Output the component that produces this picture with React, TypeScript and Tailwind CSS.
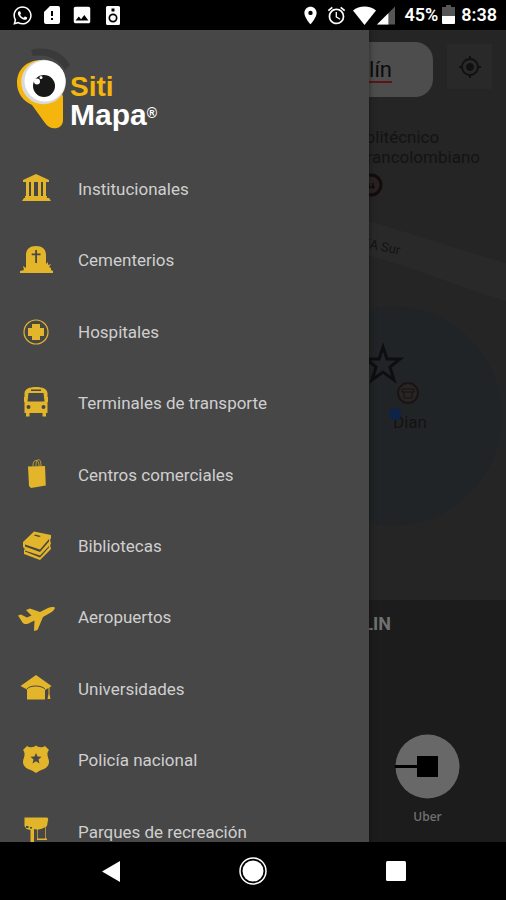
import React from 'react';
import { FaWhatsapp } from 'react-icons/fa';
import { MdAlarm, MdImage, MdMyLocation, MdPlace } from 'react-icons/md';

type MenuItem = {
  label: string;
  icon: React.ReactNode;
};

const items: MenuItem[] = [
  {
    label: 'Institucionales',
    icon: (
      <>
        <path d="M18 2 31 8v2H5V8z" />
        <path d="M8 10h3v14H8zM13 10h3v14h-3zM20 10h3v14h-3zM25 10h3v14h-3z" />
        <path d="M7 24h22v2h2l2 3H4l2-3h1z" />
      </>
    ),
  },
  {
    label: 'Cementerios',
    icon: (
      <>
        <path d="M8 27V12C8 6 12 3 18 3s10 3 10 9v9l2-2v3l3-1-2 3 2 1v2l2 1v2H2v-2l4-1-1-4 3 2z" />
        <path d="M17.2 7h1.8v3.5h3.500v1.800H19V20h-1.800v-7.700h-3.500v-1.800h3.500z" fill="#474747" />
      </>
    ),
  },
  {
    label: 'Hospitales',
    icon: (
      <>
        <circle cx="18" cy="17" r="12" fill="none" stroke="currentColor" strokeWidth="1.2" />
        <path d="M14 9h8v4h4v8h-4v4h-8v-4h-4v-8h4z" />
      </>
    ),
  },
  {
    label: 'Terminales de transporte',
    icon: (
      <path
        fillRule="evenodd"
        d="M18 1c-7 0-11 2-11.500 6v4H6v5h.5v11H8v3.500h3.500V27h13v3.500H28V27h1.500V16h.5v-5h-.5V7C29 3 25 1 18 1zm-5 2.500h10v1.500H13zM10.500 7h15l1 8.500h-17zM10.500 19a2 2 0 1 1 0 4 2 2 0 0 1 0-4zm15 0a2 2 0 1 1 0 4 2 2 0 0 1 0-4z"
      />
    ),
  },
  {
    label: 'Centros comerciales',
    icon: (
      <>
        <path d="M10 9.500 27 9l.8 19.500L13 31l-2-2z" />
        <path d="M15 9.500c0-4 1-6 3-6s3 2 3 6M18 9c0-4 1-6.500 2.500-6.500S23 5 23 9" fill="none" stroke="currentColor" strokeWidth=".8" />
      </>
    ),
  },
  {
    label: 'Bibliotecas',
    icon: (
      <>
        <path d="M16 2.500 33 6v3.500l-1 1 1 4.500-1 1 1 4-11 11L6 25v-4l1-1-2-2v-5z" />
        <path d="M7 15.500 22 20.500 31 10v2.500L22 23 7 17.500zM7 21.500 22 26.500l9-9.500v1.500l-9 10-15-6z" fill="#474747" />
        <path d="m17 5.500 6 1.500-2 1-5-1.500z" fill="#474747" />
      </>
    ),
  },
  {
    label: 'Aeropuertos',
    icon: (
      <path d="M0 15.500 3 14.500l6 3 4.500-2L8 10l4-1.500L22 12l8-4c3-1 6-1.500 7-.5 0 1.500-2 4-5 5.500l-7 4L19.500 30l-3.500 1 .5-10.500-6 3c-3 1-5 .5-6-1z" />
    ),
  },
  {
    label: 'Universidades',
    icon: (
      <>
        <path d="M18 3 33.500 14 31.500 15.500V22l1 5h-3l1-5v-6L27 18v9.500H9V17.500L2.500 14z" />
        <path d="M9 17c3-4 14-4 18 0" fill="none" stroke="#474747" strokeWidth="1" />
      </>
    ),
  },
  {
    label: 'Policía nacional',
    icon: (
      <path
        fillRule="evenodd"
        d="M9 3c2 1.500 5 1.500 7 .8L18 2.500l2 1.300c2 .7 5 .7 7-.8L31 7c-2.500 3-1.500 6-.5 9 1.500 5-.5 8-4.500 10-4 1.500-6 2.500-8 4-2-1.500-4-2.500-8-4-4-2-6-5-4.500-10 1-3 2-6-.5-9zm9 7-1.500 3.500-4 .3 3 2.700-1 4 3.500-2.200 3.500 2.200-1-4 3-2.700-4-.3z"
      />
    ),
  },
  {
    label: 'Parques de recreación',
    icon: (
      <>
        <path d="M8 3.500h20c2 0 2.500 1 2 2.500L29 12c-4 3-8 3.500-11 3.500l-2-.5v17h-3.500V16l-4-1-2-3V3.500z" />
        <path d="M19.500 14v11M27.500 12v13" stroke="currentColor" strokeWidth=".7" />
        <path d="M19 24.500h10V26H19z" />
        <path d="M8 12h2.500v2H8zM12 13h2v1.500h-2z" fill="#474747" />
      </>
    ),
  },
];

const StatusBar: React.FC = () => (
  <header className="flex h-[30px] shrink-0 items-center justify-between bg-black pl-3 pr-[9px] text-white">
    <div className="flex items-center gap-[9px]">
      <FaWhatsapp size={21} />
      <svg width="20" height="20" viewBox="0 0 20 20" fill="currentColor">
        <path fillRule="evenodd" d="M8 1h8a2 2 0 0 1 2 2v14a2 2 0 0 1-2 2H4a2 2 0 0 1-2-2V7zm1 5v5h2V6zm0 7v2h2v-2z" />
      </svg>
      <MdImage size={22} />
      <svg className="ml-1" width="14" height="19" viewBox="0 0 14 19" fill="currentColor">
        <path
          fillRule="evenodd"
          d="M1.500 0h11A1.500 1.500 0 0 1 14 1.500v16a1.500 1.500 0 0 1-1.500 1.500h-11A1.500 1.500 0 0 1 0 17.500v-16A1.500 1.500 0 0 1 1.500 0zM5.500 2.500v3h3v-3zM7 7.500a4.500 4.500 0 1 0 0 9 4.500 4.500 0 0 0 0-9z"
        />
        <circle cx="7" cy="12" r="2.800" />
      </svg>
    </div>
    <div className="flex items-center font-[Roboto,sans-serif] text-lg font-semibold">
      <MdPlace size={21} />
      <MdAlarm className="ml-[5px]" size={21} />
      <svg className="ml-[6px]" width="23" height="19" viewBox="0 0 23 19" fill="currentColor">
        <path d="M0 4.500C6-1 17-1 23 4.500L11.500 19z" />
      </svg>
      <svg className="ml-px" width="18" height="19" viewBox="0 0 19 19" fill="currentColor">
        <path d="M19 0v19H0z" fill="#555" />
        <path d="M12 7v12H0z" />
      </svg>
      <span className="ml-[9px]">45%</span>
      <svg className="ml-1" width="13" height="20" viewBox="0 0 13 20" fill="currentColor">
        <path d="M4 0h5v2h4v9H0V2h4z" fill="#555" />
        <path d="M0 11h13v7a1 1 0 0 1-1 1H1a1 1 0 0 1-1-1z" />
      </svg>
      <span className="ml-[6px]">8:38</span>
    </div>
  </header>
);

const MapView: React.FC = () => (
  <section className="relative flex-1 overflow-hidden bg-[#252525] text-[#131313]">
    <svg className="absolute left-0 top-0 h-[570px] w-[506px]" viewBox="0 0 506 570" aria-hidden="true">
      <path d="M300 175C370 188 420 208 506 233v38C440 252 390 224 300 212z" fill="#292929" />
      <circle cx="392" cy="386" r="110" fill="#212426" />
      <path d="m383 317 4 12h13l-10 8 4 13-11-8-11 8 4-13-10-8h13z" fill="none" stroke="#0d0e0f" strokeWidth="3" />
      <circle cx="408" cy="363" r="10" fill="#282524" stroke="#181514" strokeWidth="2" />
      <path d="M402 359h12M404 362v6h8v-6M402 359v3h12v-3" fill="none" stroke="#151311" />
      <circle cx="371" cy="155" r="10" fill="#282322" stroke="#120d0c" strokeWidth="3" />
      <path d="M367 157h8M369 153v6M373 153v6" stroke="#120d0c" strokeWidth="1.500" />
    </svg>

    <div className="relative flex items-start gap-[14px] pl-3 pr-[14px] pt-3">
      <div className="relative flex min-w-0 flex-1">
        <input
          aria-label="Buscar"
          defaultValue="Medellín"
          className="h-[55px] w-full rounded-[18px] bg-[#4d4d4d] pr-[41px] text-right font-[Roboto,sans-serif] text-[22px] text-[#0c0c0c] outline-none"
        />
        <span className="absolute bottom-[14px] right-[41px] h-[2px] w-[84px] bg-[#5a1515]" />
      </div>
      <button aria-label="Mi ubicación" className="mt-[2px] flex size-[45px] items-center justify-center bg-[#292929] text-[#111]">
        <MdMyLocation size={24} />
      </button>
    </div>

    <p className="absolute left-[355px] top-[97px] font-[Roboto,sans-serif] text-[17px] leading-5">
      Politécnico
      <br />
      Grancolombiano
    </p>
    <p className="absolute left-[355px] top-[206px] rotate-12 font-[Roboto,sans-serif] text-[13px]">55A Sur</p>
    <p className="absolute left-[393px] top-[382px] font-[Roboto,sans-serif] text-[17px] leading-5">Dian</p>
    <span className="absolute left-[389px] top-[378px] size-3 rounded-full bg-[#0d2348]" />
  </section>
);

const TransportPanel: React.FC = () => (
  <section className="flex h-[242px] shrink-0 flex-col items-end bg-[#1c1c1c] text-[#707070]">
    <h2 className="pr-[115px] pt-3 font-[Roboto,sans-serif] text-lg font-bold leading-6">MEDELLIN</h2>
    <button className="mr-[46px] mt-[98px] flex flex-col items-center">
      <svg width="65" height="65" viewBox="0 0 65 65">
        <circle cx="32.500" cy="32.500" r="32" fill="#686868" />
        <path d="M0 31h22v-9h21v21H22v-9H0z" fill="#000" />
      </svg>
      <span className="mt-[10px] font-['Open_Sans',sans-serif] text-xs font-semibold leading-4">Uber</span>
    </button>
  </section>
);

const Logo: React.FC = () => (
  <div className="flex h-[124px] shrink-0 items-start pl-4 pt-4">
    <svg width="54" height="86" viewBox="0 0 54 86">
      <path d="M15 4C29 0 46 4 54 19l-5 5C42 12 30 8 17 10z" fill="#3a3a3a" />
      <path d="M26 14C9 14 1 25 1 37c0 10 6 18 15 22l13 18c5 8 18 7 18-3V50z" fill="#f4b60c" />
      <circle cx="27.500" cy="36" r="22.300" fill="#d9d9d9" />
      <circle cx="29" cy="35" r="20.500" fill="#fff" />
      <circle cx="28" cy="40" r="11" fill="#171717" />
      <circle cx="21" cy="35.500" r="3" fill="#fff" />
      <circle cx="25" cy="31.500" r="1.500" fill="#fff" />
    </svg>
    <div className="pt-[27px] font-['Liberation_Sans',sans-serif] font-bold">
      <p className="text-[28px] leading-7 text-[#f4b60c]">Siti</p>
      <p className="flex text-[30px] leading-7 text-white">
        Mapa<span className="text-sm leading-6">®</span>
      </p>
    </div>
  </div>
);

const Drawer: React.FC = () => (
  <nav className="absolute inset-y-0 left-0 flex w-[73%] flex-col overflow-hidden bg-[#474747] shadow-[0_0_6px_rgba(0,0,0,0.5)]">
    <Logo />
    <ul className="-mb-[26px] flex flex-1 flex-col">
      {items.map((item) => (
        <li key={item.label} className="flex-1">
          <a href="#" className="flex h-full items-center gap-6 pl-[18px] font-[Roboto,sans-serif] text-[17px] text-[#cfcfcf]">
            <svg className="shrink-0 overflow-visible text-[#e3b52a]" width="36" height="36" viewBox="0 0 36 36" fill="currentColor">
              {item.icon}
            </svg>
            {item.label}
          </a>
        </li>
      ))}
    </ul>
  </nav>
);

const NavBar: React.FC = () => (
  <footer className="flex h-[58px] shrink-0 items-center justify-center gap-[113px] bg-black text-white">
    <button aria-label="Atrás">
      <svg width="30" height="30" viewBox="0 0 30 30" fill="currentColor">
        <path d="M25 5v21L7 15.500z" />
      </svg>
    </button>
    <button aria-label="Inicio">
      <svg width="30" height="30" viewBox="0 0 30 30">
        <circle cx="15" cy="15" r="13" fill="none" stroke="#fff" strokeWidth="1.500" />
        <circle cx="15" cy="15" r="10.500" fill="#fff" />
      </svg>
    </button>
    <button aria-label="Recientes">
      <svg width="30" height="30" viewBox="0 0 30 30" fill="currentColor">
        <rect x="5" y="5" width="20" height="20" rx="1.500" />
      </svg>
    </button>
  </footer>
);

const App: React.FC = () => (
  <div className="flex h-screen flex-col bg-black">
    <StatusBar />
    <main className="relative flex min-h-0 flex-1 flex-col">
      <MapView />
      <TransportPanel />
      <Drawer />
    </main>
    <NavBar />
  </div>
);

export default App;
